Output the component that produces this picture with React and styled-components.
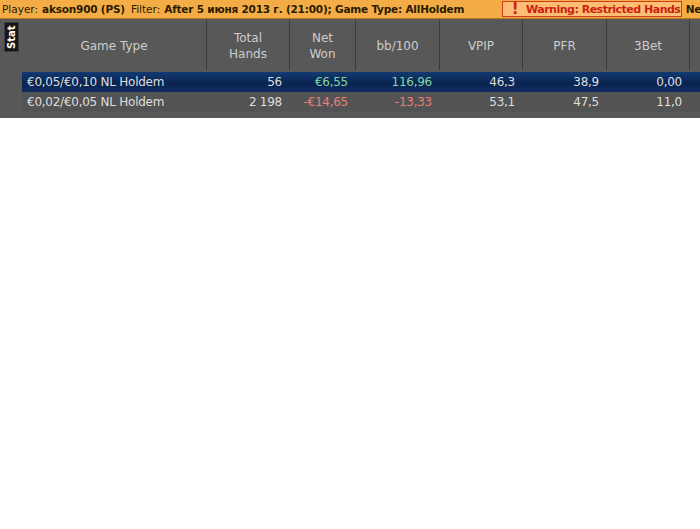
import React from 'react';
import styled, { createGlobalStyle } from 'styled-components';

const Global = createGlobalStyle`
  body {
    margin: 0;
    background: #ffffff;
    font-family: "DejaVu Sans", Verdana, sans-serif;
  }
`;

const columns = [
  { key: 'game', title: 'Game Type', width: 185, align: 'left' },
  { key: 'hands', title: 'Total\nHands', width: 83 },
  { key: 'won', title: 'Net\nWon', width: 66 },
  { key: 'bb', title: 'bb/100', width: 84 },
  { key: 'vpip', title: 'VPIP', width: 83 },
  { key: 'pfr', title: 'PFR', width: 84 },
  { key: 'threebet', title: '3Bet', width: 83 },
  { key: 'next', title: '', width: 40 },
];

const rows = [
  { game: '€0,05/€0,10 NL Holdem', hands: '56', won: '€6,55', bb: '116,96', vpip: '46,3', pfr: '38,9', threebet: '0,00', tone: 'win', selected: true },
  { game: '€0,02/€0,05 NL Holdem', hands: '2 198', won: '-€14,65', bb: '-13,33', vpip: '53,1', pfr: '47,5', threebet: '11,0', tone: 'loss' },
];

const Wrap = styled.div`
  width: 700px;
  overflow: hidden;
`;

const InfoBar = styled.div`
  height: 18px;
  display: flex;
  align-items: center;
  background: #f4ad46;
  border-bottom: 1px solid #b9781f;
  font-size: 10.5px;
  color: #2a1a00;
  white-space: nowrap;
  padding-left: 2px;
  overflow: hidden;
`;

const Label = styled.span`
  margin-right: 4px;
`;

const Value = styled.b`
  margin-right: 6px;
  letter-spacing: -0.2px;
`;

const Warning = styled.div`
  margin-left: auto;
  flex: 0 0 auto;
  width: 180px;
  height: 16px;
  box-sizing: border-box;
  display: flex;
  align-items: center;
  background: #fbbe74;
  border: 1px solid #d23a1f;
  color: #cc1f0f;
  font-weight: bold;
  font-size: 11px;
  letter-spacing: -0.5px;
  padding-left: 9px;
  margin-right: 4px;
`;

const Bang = styled.span`
  font-size: 15px;
  font-weight: bold;
  margin-right: 8px;
  line-height: 1;
`;

const Overflow = styled.b`
  color: #2a1a00;
  flex: 0 0 auto;
  margin-right: -1px;
  letter-spacing: -0.3px;
`;

const Panel = styled.div`
  display: flex;
  background: #585858;
  height: 99px;
`;

const SideStrip = styled.div`
  width: 22px;
  flex: 0 0 22px;
  display: flex;
  justify-content: center;
  padding-top: 3px;
`;

const Tab = styled.div`
  width: 13px;
  height: 28px;
  background: #161616;
  color: #ffffff;
  font-size: 10px;
  font-weight: bold;
  writing-mode: vertical-rl;
  transform: rotate(180deg);
  display: flex;
  align-items: center;
  justify-content: center;
  border: 1px solid #3c3c3c;
`;

const Grid = styled.div`
  flex: 1;
  display: flex;
  flex-direction: column;
`;

const HeaderRow = styled.div`
  display: flex;
  height: 51px;
`;

const HeadCell = styled.div`
  flex: 0 0 ${p => p.$w}px;
  display: flex;
  align-items: center;
  justify-content: center;
  text-align: center;
  white-space: pre-line;
  color: #cdcdcd;
  font-size: 12px;
  line-height: 16px;
  border-right: 1px solid #3b3b3b;
  box-sizing: border-box;
  padding-top: 2px;
`;

const DataRow = styled.div`
  display: flex;
  height: 20px;
  align-items: center;
  background: ${p => (p.$selected ? 'linear-gradient(#123a72, #0a2451 55%, #0e2c5e)' : '#535353')};
`;

const Cell = styled.div`
  flex: 0 0 ${p => p.$w}px;
  box-sizing: border-box;
  font-size: 12px;
  letter-spacing: -0.25px;
  color: ${p => p.$color || '#dedede'};
  text-align: ${p => p.$align || 'right'};
  padding: ${p => (p.$align === 'left' ? '0 0 0 5px' : '0 8px 0 0')};
  white-space: nowrap;
  overflow: hidden;
`;

const Spacer = styled.div`
  height: 2px;
`;

const toneColor = (tone) => (tone === 'win' ? '#82d6a4' : '#e7807a');

export default function App() {
  return (
    <Wrap>
      <Global />
      <InfoBar>
        <Label>Player:</Label>
        <Value>akson900 (PS)</Value>
        <Label>Filter:</Label>
        <Value>After 5 июня 2013 г. (21:00); Game Type: AllHoldem</Value>
        <Warning>
          <Bang>!</Bang>
          Warning: Restricted Hands
        </Warning>
        <Overflow>Ne</Overflow>
      </InfoBar>
      <Panel>
        <SideStrip>
          <Tab>Stat</Tab>
        </SideStrip>
        <Grid>
          <HeaderRow>
            {columns.map(c => (
              <HeadCell key={c.key} $w={c.width}>{c.title}</HeadCell>
            ))}
          </HeaderRow>
          <Spacer />
          {rows.map((r, i) => (
            <DataRow key={i} $selected={r.selected}>
              {columns.map(c => {
                const colored = c.key === 'won' || c.key === 'bb';
                return (
                  <Cell
                    key={c.key}
                    $w={c.width}
                    $align={c.align}
                    $color={colored ? toneColor(r.tone) : undefined}
                  >
                    {r[c.key] || ''}
                  </Cell>
                );
              })}
            </DataRow>
          ))}
        </Grid>
      </Panel>
    </Wrap>
  );
}
